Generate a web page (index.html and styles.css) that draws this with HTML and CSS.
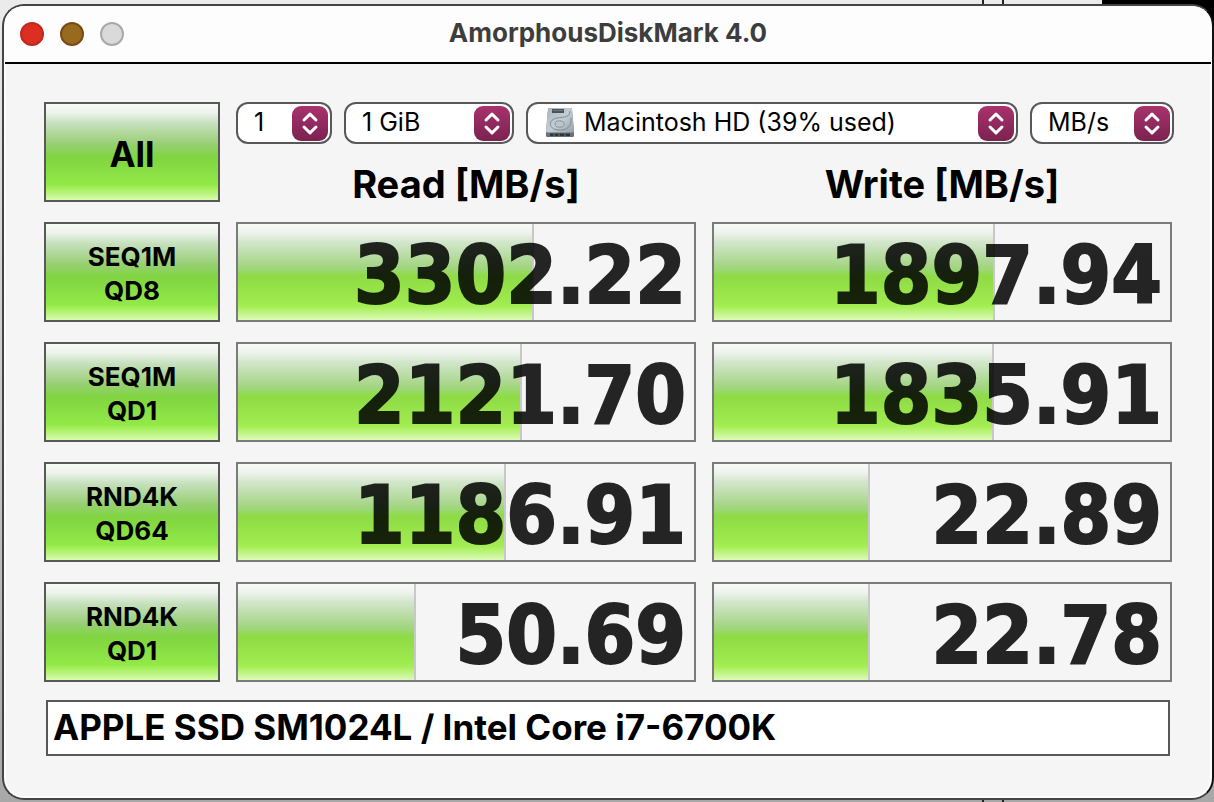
FILE: index.html
```html
<!DOCTYPE html>
<html lang="en">
<head>
  <meta charset="UTF-8" />
  <meta name="viewport" content="width=device-width, initial-scale=1.0"/>
  <title>AmorphousDiskMark 4.0</title>
  <link rel="stylesheet" href="styles.css">
</head>
<body>
  <svg width="0" height="0" class="defs" aria-hidden="true">
    <defs>
      <linearGradient id="pink" x1="0" y1="0" x2="0" y2="1">
        <stop offset="0" stop-color="#a9326d"/>
        <stop offset="1" stop-color="#7b2250"/>
      </linearGradient>
      <symbol id="stepper" viewBox="0 0 36 35">
        <rect width="36" height="35" rx="9" fill="url(#pink)"/>
        <path d="M12 14 18 8.200 24 14M12 21 18 26.800 24 21" fill="none" stroke="#fff" stroke-width="3" stroke-linecap="round" stroke-linejoin="round"/>
      </symbol>
    </defs>
  </svg>

  <main class="window">
    <header class="titlebar">
      <div class="lights">
        <button class="light close" aria-label="Close"></button>
        <button class="light minimize" aria-label="Minimize"></button>
        <button class="light zoom" aria-label="Zoom" disabled></button>
      </div>
      <h1>AmorphousDiskMark 4.0</h1>
    </header>

    <div class="content">
      <div class="board">
        <button class="run run-all">All</button>
        <div class="top">
          <div class="options">
            <div class="picker count">
              <select aria-label="Test count"><option>1</option></select>
              <svg class="stepper"><use href="#stepper"/></svg>
            </div>
            <div class="picker size">
              <select aria-label="Test size"><option>1 GiB</option></select>
              <svg class="stepper"><use href="#stepper"/></svg>
            </div>
            <div class="picker volume">
              <svg class="disk" viewBox="0 0 30 30">
                <defs>
                  <linearGradient id="metal" x1="0" y1="0" x2="1" y2="1">
                    <stop offset="0" stop-color="#aab4bb"/>
                    <stop offset=".5" stop-color="#c3cdd3"/>
                    <stop offset="1" stop-color="#98a3aa"/>
                  </linearGradient>
                </defs>
                <path d="M3 1Q3.200 0 4.500 0H25.500Q26.800 0 27 1L29 24V27.500Q29 29 27.500 29H2.500Q1 29 1 27.500V24Z" fill="#697278"/>
                <path d="M3 1Q3.200 0 4.500 0H25.500Q26.800 0 27 1L29 23Q29 24.500 27.500 24.500H2.500Q1 24.500 1 23Z" fill="url(#metal)"/>
                <rect x="7" y="1" width="12" height="4" fill="#4b5358"/>
                <path d="M8 2.500H18" stroke="#8c969c" stroke-width=".6"/>
                <path d="M25 3C25 9 20 9 12 10C3 11.500 3 21 13 22C22 23 27 18 26 10" fill="none" stroke="#78848c" stroke-width=".9"/>
                <ellipse cx="14.500" cy="16" rx="4.500" ry="3.200" fill="#bac6ce" stroke="#7c8991" stroke-width=".8"/>
                <path d="M5 25.500H25V28H5Z" fill="#2f3538"/>
                <path d="M9 25.500V28M14 25.500V28M20 25.500V28" stroke="#727c82"/>
              </svg>
              <select aria-label="Volume"><option>Macintosh HD (39% used)</option></select>
              <svg class="stepper"><use href="#stepper"/></svg>
            </div>
            <div class="picker unit">
              <select aria-label="Unit"><option>MB/s</option></select>
              <svg class="stepper"><use href="#stepper"/></svg>
            </div>
          </div>
          <div class="heads">
            <h2>Read [MB/s]</h2>
            <h2>Write [MB/s]</h2>
          </div>
        </div>

        <button class="run">SEQ1M<br>QD8</button>
        <div class="result"><div class="fill" style="width:65%"></div><span>3302.22</span></div>
        <div class="result"><div class="fill" style="width:61.6%"></div><span>1897.94</span></div>

        <button class="run">SEQ1M<br>QD1</button>
        <div class="result"><div class="fill" style="width:62.3%"></div><span>2121.70</span></div>
        <div class="result"><div class="fill" style="width:61.4%"></div><span>1835.91</span></div>

        <button class="run">RND4K<br>QD64</button>
        <div class="result"><div class="fill" style="width:58.8%"></div><span>1186.91</span></div>
        <div class="result"><div class="fill" style="width:34.2%"></div><span>22.89</span></div>

        <button class="run">RND4K<br>QD1</button>
        <div class="result"><div class="fill" style="width:39%"></div><span>50.69</span></div>
        <div class="result"><div class="fill" style="width:34.2%"></div><span>22.78</span></div>
      </div>

      <input class="note" type="text" aria-label="Device" value="APPLE SSD SM1024L / Intel Core i7-6700K">
    </div>
  </main>
</body>
</html>
```

FILE: styles.css
```css
* {
  box-sizing: border-box;
}
body {
  margin: 0;
  min-height: 100vh;
  padding: 4px 0 2px 2px;
  font-family: Inter, "Liberation Sans", sans-serif;
  color: #000;
  /* desktop behind the window */
  background:
    linear-gradient(#000, #000) right top / 112px 734px no-repeat,
    linear-gradient(#222, #222) 982px 0 / 2px 100% no-repeat,
    linear-gradient(#222, #222) 1002px 0 / 2px 100% no-repeat,
    linear-gradient(#ebebeb, #a8a8a8);
}
.defs {
  position: absolute;
}
.window {
  min-height: calc(100vh - 6px);
  border: 2px solid #444;
  border-right-color: #111;
  border-radius: 22px;
  background: #f5f5f5;
  box-shadow: inset 0 0 0 2px #fdfdfd;
  overflow: hidden;
}

/* title bar */
.titlebar {
  display: grid;
  grid-template-columns: 1fr auto 1fr;
  align-items: center;
  height: 58px;
  margin: 0 1px;
  padding: 0 15px;
  background: #fdfdfd;
  border-bottom: 2px solid #000;
}
.titlebar h1 {
  margin: 0;
  padding-bottom: 2px;
  font-size: 26px;
  line-height: 32px;
  font-weight: 700;
  color: #3d3d3d;
}
.lights {
  display: flex;
  gap: 16px;
}
.light {
  width: 24px;
  height: 24px;
  padding: 0;
  border: 2px solid;
  border-radius: 50%;
}
.close {
  background: #dc2f21;
  border-color: #bd2a1e;
}
.minimize {
  background: #976a20;
  border-color: #794b15;
}
.zoom {
  background: #dadada;
  border-color: #a9a9a9;
}

.content {
  padding: 38px 40px 40px;
}
.board {
  display: grid;
  grid-template-columns: 176px 1fr 1fr;
  grid-auto-rows: 100px;
  gap: 20px 16px;
}

/* green test buttons */
.run {
  padding: 4px 0 0;
  border: 2px solid #585858;
  font-family: inherit;
  font-size: 26px;
  line-height: 34px;
  font-weight: 700;
  color: #000;
  background: linear-gradient(#f8faf8, #edf3ec 9%, #c5dfbb 21%, #97cf73 42%, #80d540 56%, #93e948 84%, #a8f161 89%, #d9fbb0);
}
.run-all {
  font-size: 35px;
}

/* pop-up menus and column titles */
.top {
  grid-column: 2 / 4;
}
.options {
  display: flex;
  gap: 12px;
  margin-right: -2px;
}
.picker {
  position: relative;
  height: 42px;
}
.picker select {
  appearance: none;
  width: 100%;
  height: 42px;
  padding: 0 40px 2px 16px;
  border: 2px solid #585858;
  border-radius: 12px;
  background: #fff;
  font-family: inherit;
  font-size: 25px;
  color: #000;
}
.count { width: 96px; }
.size { width: 170px; }
.volume { flex: 1; }
.unit { width: 144px; }
.volume select {
  padding-left: 56px;
}
.stepper {
  position: absolute;
  top: 4px;
  right: 4px;
  width: 36px;
  height: 35px;
  pointer-events: none;
}
.disk {
  position: absolute;
  top: 6px;
  left: 19px;
  width: 30px;
  height: 30px;
  pointer-events: none;
}
.heads {
  display: grid;
  grid-template-columns: 1fr 1fr;
  gap: 16px;
  margin-top: 16px;
}
.heads h2 {
  margin: 0;
  text-align: center;
  font-size: 38px;
  line-height: 48px;
  font-weight: 700;
}

/* score boxes */
.result {
  position: relative;
  display: flex;
  justify-content: flex-end;
  padding: 8px 8px 0 0;
  border: 2px solid #7b7b7b;
}
.result span {
  position: relative;
  font-family: "DejaVu Sans Condensed", "DejaVu Sans", sans-serif;
  font-size: 81px;
  line-height: 86px;
  font-weight: 700;
  -webkit-text-stroke: 2px #000;
  opacity: 0.85;
}
.fill {
  position: absolute;
  top: 0;
  bottom: 0;
  left: 0;
  border-right: 2px solid #c8c8c8;
  background: linear-gradient(#f8faf8, #edf3ec 9%, #d2e6cb 19%, #a4d584 44%, #98d96b 49%, #8fdb46 54%, #9ee94d 80%, #a5ef55 86%, #dcfab8);
}

.note {
  display: block;
  width: calc(100% - 4px);
  height: 56px;
  margin: 18px 2px 0;
  padding: 0 5px 2px;
  border: 2px solid #585858;
  border-radius: 0;
  background: #fff;
  font-family: inherit;
  font-size: 35px;
  font-weight: 700;
  color: #000;
}
```
